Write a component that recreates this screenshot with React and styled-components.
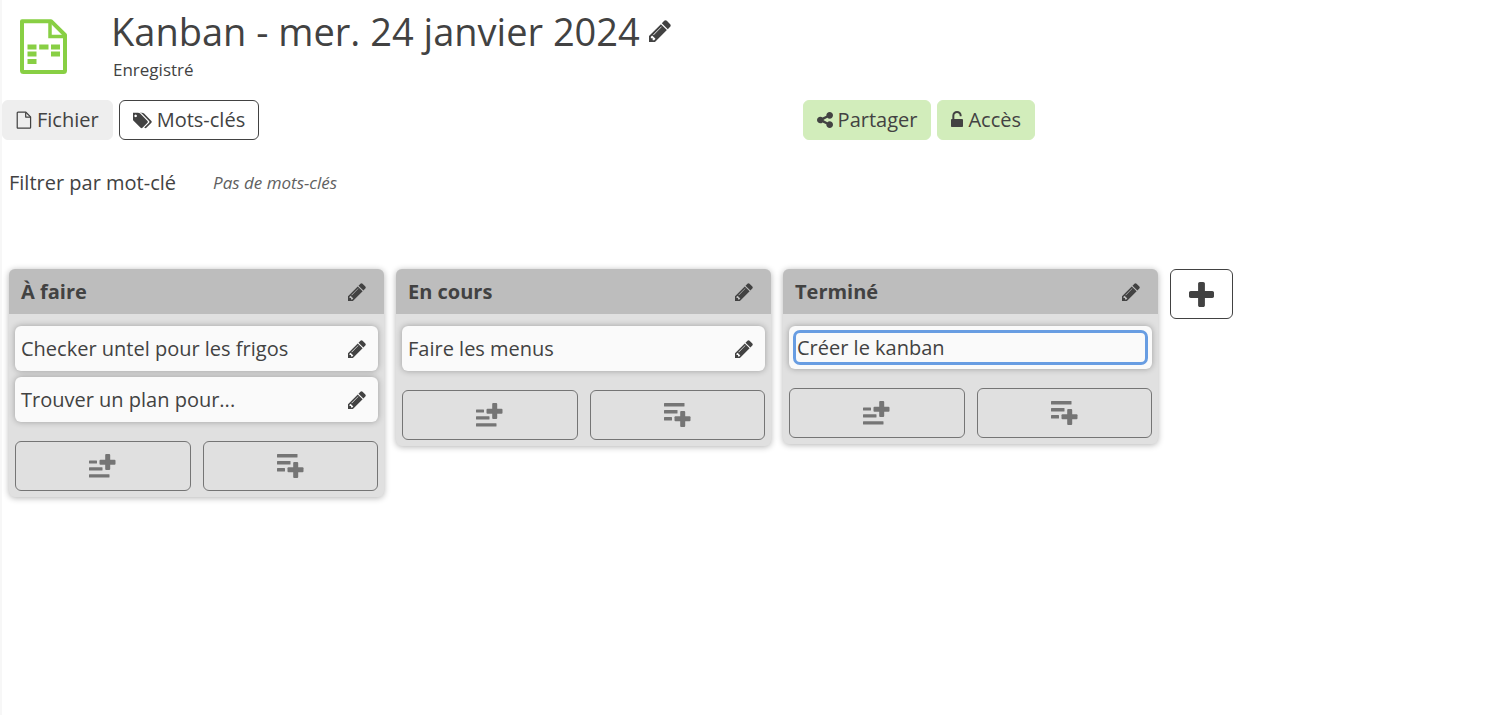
import React from "react";
import styled, { createGlobalStyle } from "styled-components";

const GlobalStyle = createGlobalStyle`
  * { box-sizing: border-box; }
  body {
    margin: 0;
    background: #fff;
    color: #424242;
    font-family: "Open Sans", "Noto Sans", sans-serif;
    font-size: 20px;
    line-height: 28px;
  }
  button, input { font: inherit; color: inherit; margin: 0; }
  button { cursor: pointer; }
  svg { display: block; flex: none; }
`;

const Page = styled.div`
  min-height: 100vh;
  border-left: 2px solid #f7f7f7;
`;

const Header = styled.header`
  display: flex;
  gap: 43px;
  height: 100px;
  padding: 5px 18px 0;
`;

const Logo = styled.svg`
  margin-top: 14px;
`;

const TitleRow = styled.div`
  display: flex;
  align-items: center;
  gap: 9px;
`;

const Title = styled.h1`
  margin: 0;
  font-size: 38px;
  line-height: 52px;
  font-weight: 400;
`;

const SaveState = styled.div`
  padding-left: 2px;
  font-size: 17px;
  line-height: 26px;
`;

const IconButton = styled.button`
  display: flex;
  padding: 0;
  border: 0;
  background: none;
`;

const Toolbar = styled.nav`
  display: flex;
  justify-content: space-between;
  max-width: 1033px;
`;

const ToolGroup = styled.div`
  display: flex;
  gap: 6px;
`;

const tones = {
  plain: "#eeeeee",
  outline: "#ffffff",
  green: "#d2edbb",
};

const ToolButton = styled.button`
  display: flex;
  align-items: center;
  gap: 5px;
  height: 40px;
  padding: 0 13px;
  border: 1px solid ${(p) => (p.$tone === "outline" ? "#424242" : tones[p.$tone])};
  border-radius: 6px;
  background: ${(p) => tones[p.$tone]};
`;

const FilterBar = styled.section`
  display: flex;
  align-items: center;
  gap: 37px;
  height: 86px;
  padding-left: 7px;
`;

const NoTags = styled.em`
  font-size: 17px;
  color: #616161;
`;

const Board = styled.main`
  display: flex;
  align-items: flex-start;
  gap: 12px;
  padding: 43px 7px 20px;
`;

const Column = styled.section`
  flex: 0 0 375px;
  border-radius: 6px;
  background: #e0e0e0;
  box-shadow: 0 1px 6px rgba(0, 0, 0, 0.3);
`;

const ColumnHeader = styled.header`
  display: flex;
  align-items: center;
  justify-content: space-between;
  height: 45px;
  padding: 0 18px 0 12px;
  border-radius: 6px 6px 0 0;
  background: #bdbdbd;
`;

const ColumnTitle = styled.h2`
  margin: 0;
  font-size: 20px;
  line-height: 28px;
  font-weight: 700;
`;

const Cards = styled.ul`
  display: flex;
  flex-direction: column;
  gap: 6px;
  margin: 0;
  padding: 12px 6px 19px;
  list-style: none;
`;

const Card = styled.li`
  display: flex;
  align-items: center;
  justify-content: space-between;
  min-height: ${(p) => (p.$editing ? "43px" : "45px")};
  padding: ${(p) => (p.$editing ? "4px" : "0 12px 0 6px")};
  border-radius: 6px;
  background: #fafafa;
  box-shadow: 0 0 6px rgba(0, 0, 0, 0.3);
`;

const CardInput = styled.input`
  width: 100%;
  height: 35px;
  padding: 0 1px;
  border: 3px solid #689de2;
  border-radius: 7px;
  background: #fafafa;
  outline: none;
`;

const AddRow = styled.div`
  display: flex;
  gap: 12px;
  padding: 0 6px 6px;
`;

const AddButton = styled.button`
  display: flex;
  flex: 1;
  align-items: center;
  justify-content: center;
  height: 50px;
  border: 1px solid #757575;
  border-radius: 6px;
  background: transparent;
  color: #757575;
`;

const NewColumn = styled.button`
  display: flex;
  align-items: center;
  justify-content: center;
  width: 63px;
  height: 50px;
  padding: 0;
  border: 1px solid #424242;
  border-radius: 6px;
  background: #fff;
`;

const Pencil = ({ size = 18 }) => (
  <svg width={size} height={size} viewBox="128 128 1536 1536" fill="currentColor" aria-hidden="true">
    <path d="M491 1536l91-91-235-235-91 91v107h128v128h107zm523-928q0-22-22-22-10 0-17 7l-542 542q-7 7-7 17 0 22 22 22 10 0 17-7l542-542q7-7 7-17zm-54-192l416 416-832 832h-416v-416zm683 96q0 53-37 90l-166 166-416-416 166-165q36-38 90-38 53 0 91 38l235 234q37 39 37 91z" />
  </svg>
);

const FileIcon = () => (
  <svg width="16" height="19" viewBox="0 0 17 20" fill="none" stroke="currentColor" strokeWidth="1.3" strokeLinejoin="round" aria-hidden="true">
    <path d="M2.1 1.2h8.4l5 5v11.2q0 .8-.8.8H2.1q-.8 0-.8-.8V2q0-.8.8-.8z" />
    <path d="M10.3 1.4v5h5" />
  </svg>
);

const TagsIcon = () => (
  <svg width="19" height="17" viewBox="0 64 1856 1664" fill="currentColor" aria-hidden="true">
    <path d="M384 448q0-53-37.500-90.500t-90.500-37.500-90.500 37.500-37.500 90.500 37.500 90.500 90.500 37.500 90.500-37.500 37.500-90.500zm1067 576q0 53-37 90l-491 492q-39 37-91 37-53 0-90-37l-715-716q-38-37-64.500-101t-26.500-117v-416q0-52 38-90t90-38h416q53 0 117 26.500t102 64.500l715 714q37 39 37 91zm384 0q0 53-37 90l-491 492q-39 37-91 37-36 0-59-14t-53-45l470-470q37-37 37-90 0-52-37-91l-715-714q-38-38-102-64.500t-117-26.500h224q53 0 117 26.500t102 64.500l715 714q37 39 37 91z" />
  </svg>
);

const ShareIcon = () => (
  <svg width="16" height="16" viewBox="128 128 1536 1536" fill="currentColor" aria-hidden="true">
    <path d="M1344 1024q133 0 226.500 93.500t93.500 226.500-93.500 226.500-226.500 93.500-226.500-93.500-93.500-226.500q0-12 2-34l-360-180q-92 86-218 86-133 0-226.500-93.500t-93.500-226.500 93.500-226.500 226.500-93.500q126 0 218 86l360-180q-2-22-2-34 0-133 93.500-226.500t226.500-93.500 226.500 93.500 93.500 226.500-93.500 226.500-226.500 93.500q-126 0-218-86l-360 180q2 22 2 34t-2 34l360 180q92-86 218-86z" />
  </svg>
);

const UnlockIcon = () => (
  <svg width="12" height="18" viewBox="320 128 1152 1728" fill="currentColor" aria-hidden="true">
    <path d="M1376 896q40 0 68 28t28 68v576q0 40-28 68t-68 28h-960q-40 0-68-28t-28-68v-576q0-40 28-68t68-28h32v-320q0-185 131.500-316.500t316.500-131.500 316.500 131.500 131.500 316.500q0 26-19 45t-45 19h-64q-26 0-45-19t-19-45q0-106-75-181t-181-75-181 75-75 181v320h736z" />
  </svg>
);

const PlusIcon = () => (
  <svg width="25" height="25" viewBox="192 128 1408 1408" fill="currentColor" aria-hidden="true">
    <path d="M1600 736v192q0 40-28 68t-68 28h-416v416q0 40-28 68t-68 28h-192q-40 0-68-28t-28-68v-416h-416q-40 0-68-28t-28-68v-192q0-40 28-68t68-28h416v-416q0-40 28-68t68-28h192q40 0 68 28t28 68v416h416q40 0 68 28t28 68z" />
  </svg>
);

const AddTopIcon = () => (
  <svg width="27" height="24" viewBox="0 0 27 24" fill="currentColor" aria-hidden="true">
    <rect x="0" y="6.500" width="8" height="3" rx=".5" />
    <rect x="0" y="13.300" width="13.500" height="3.200" rx=".5" />
    <rect x="0" y="20.300" width="20.500" height="3.200" rx=".5" />
    <rect x="10.500" y="5.700" width="16" height="5" rx="1" />
    <rect x="16.200" y="0" width="5" height="16" rx="1" />
  </svg>
);

const AddBottomIcon = () => (
  <svg width="27" height="24" viewBox="0 0 27 24" fill="currentColor" aria-hidden="true">
    <rect x="0" y="0" width="20.500" height="3.500" rx=".5" />
    <rect x="0" y="7" width="13.500" height="3.500" rx=".5" />
    <rect x="0" y="14" width="8" height="3.500" rx=".5" />
    <rect x="10.500" y="13.300" width="16" height="5" rx="1" />
    <rect x="16.200" y="8" width="5" height="16" rx="1" />
  </svg>
);

const KanbanLogo = () => (
  <Logo width="48" height="56" viewBox="0 0 48 56" fill="none" aria-hidden="true">
    <path d="M2 2.200h29L45 16v35.500q0 1.500-1.500 1.500h-40q-1.500 0-1.500-1.500z" stroke="#88cf44" strokeWidth="4" strokeLinejoin="round" />
    <path d="M30 3v14.500h15" stroke="#88cf44" strokeWidth="3.500" />
    <g fill="#88cf44">
      <path d="M7.500 25.500h9v5h-9zM19.200 25.500h9.300v5h-9.300zM31 25.500h9v5h-9zM7.500 32.500h9v5h-9zM31 32.500h9v5h-9zM7.500 40h9v5h-9z" />
    </g>
  </Logo>
);

const columns = [
  { title: "À faire", cards: ["Checker untel pour les frigos", "Trouver un plan pour..."] },
  { title: "En cours", cards: ["Faire les menus"] },
  { title: "Terminé", cards: ["Créer le kanban"], editing: true },
];

function KanbanColumn({ title, cards, editing }) {
  return (
    <Column>
      <ColumnHeader>
        <ColumnTitle>{title}</ColumnTitle>
        <IconButton aria-label={`Modifier ${title}`}><Pencil /></IconButton>
      </ColumnHeader>
      <Cards>
        {cards.map((card) => (
          <Card key={card} $editing={editing}>
            {editing ? (
              <CardInput aria-label="Titre de la carte" defaultValue={card} />
            ) : (
              <>
                <span>{card}</span>
                <IconButton aria-label={`Modifier ${card}`}><Pencil /></IconButton>
              </>
            )}
          </Card>
        ))}
      </Cards>
      <AddRow>
        <AddButton aria-label="Ajouter en haut"><AddTopIcon /></AddButton>
        <AddButton aria-label="Ajouter en bas"><AddBottomIcon /></AddButton>
      </AddRow>
    </Column>
  );
}

export default function App() {
  return (
    <Page>
      <GlobalStyle />
      <Header>
        <KanbanLogo />
        <div>
          <TitleRow>
            <Title>Kanban - mer. 24 janvier 2024</Title>
            <IconButton aria-label="Modifier le titre"><Pencil size={22} /></IconButton>
          </TitleRow>
          <SaveState>Enregistré</SaveState>
        </div>
      </Header>
      <Toolbar>
        <ToolGroup>
          <ToolButton $tone="plain"><FileIcon />Fichier</ToolButton>
          <ToolButton $tone="outline"><TagsIcon />Mots-clés</ToolButton>
        </ToolGroup>
        <ToolGroup>
          <ToolButton $tone="green"><ShareIcon />Partager</ToolButton>
          <ToolButton $tone="green"><UnlockIcon />Accès</ToolButton>
        </ToolGroup>
      </Toolbar>
      <FilterBar>
        <span>Filtrer par mot-clé</span>
        <NoTags>Pas de mots-clés</NoTags>
      </FilterBar>
      <Board>
        {columns.map((column) => (
          <KanbanColumn key={column.title} {...column} />
        ))}
        <NewColumn aria-label="Ajouter une colonne"><PlusIcon /></NewColumn>
      </Board>
    </Page>
  );
}
